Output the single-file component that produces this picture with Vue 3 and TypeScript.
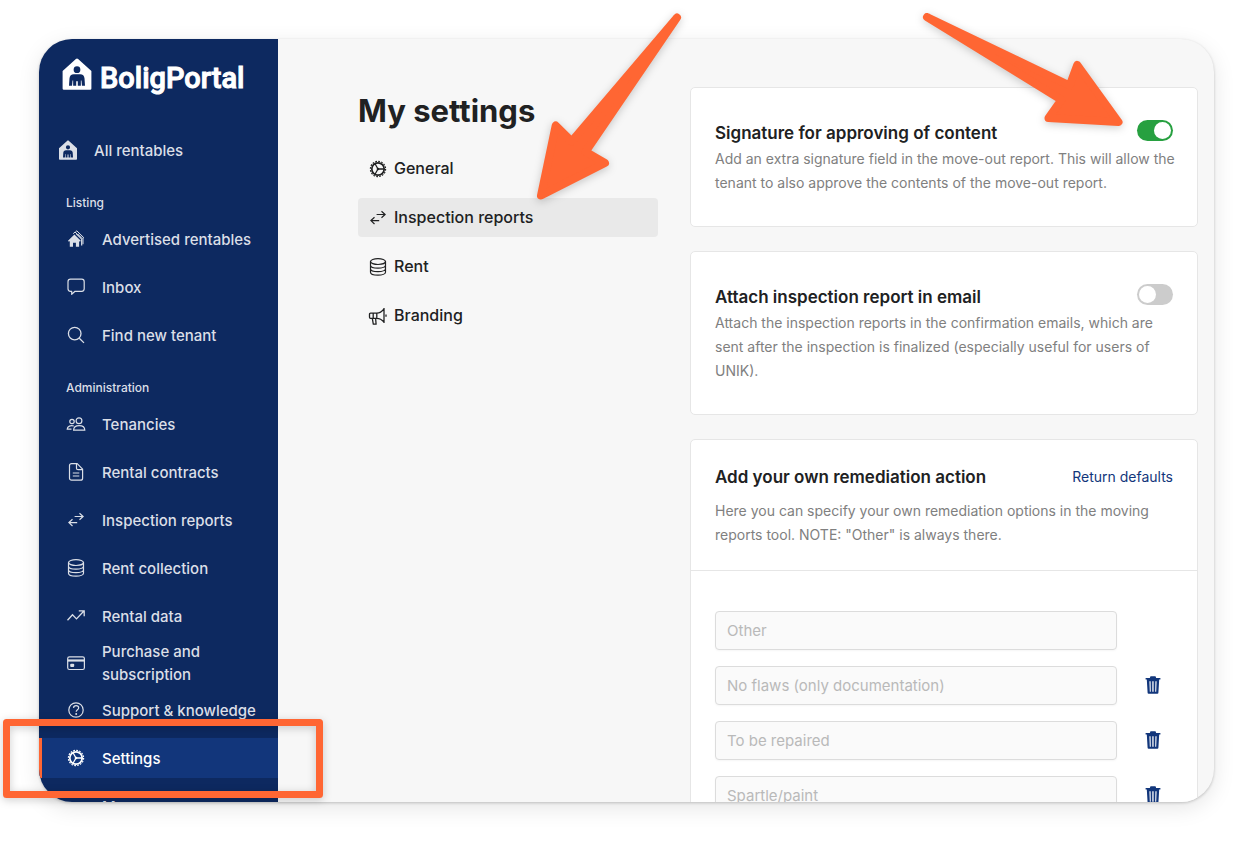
<script setup lang="ts">
import { ref } from 'vue'

interface NavItem {
  label: string
  icon: string
  active?: boolean
  tall?: boolean
}

interface Action {
  id: string
  label: string
  removable: boolean
}

const icons: Record<string, string> = {
  person:
    '<path fill="currentColor" fill-rule="evenodd" d="M9.300.7a1 1 0 0 1 1.400 0L19 8.200V19a.8.8 0 0 1-.8.8H1.800a.8.8 0 0 1-.8-.8V8.200ZM10 5.200a2.100 2.100 0 1 0 0 4.200 2.100 2.100 0 0 0 0-4.200ZM8 10.200c-1.600 0-2.600 1-2.700 2.600L5 17.400h1.900l.3-3.400h.4v3.400h1.900v-2.900h1v2.900h1.900V14h.4l.3 3.400H15l-.3-4.600c-.1-1.600-1.100-2.600-2.700-2.600Z"/>',
  houses:
    '<path fill="currentColor" d="M2 11.800 8.400 5.600l6.400 6.200-.9 1-.8-.7v5.600h-3.200v-4H7v4H3.800v-5.600l-.9.700Z"/><path d="M7.200 4.700 9 3l6.800 6.600v6.900M9.200 3.300l1.600-1.500 7 6.900-.8.700v5.800" fill="none" stroke="currentColor" stroke-width="1"/><path d="m10 4.900 5.500 5.400v6M12 4.900l4.900 4.800" fill="none" stroke="currentColor" stroke-width=".8"/>',
  chat:
    '<path d="M4.500 2.200h11.200a2.500 2.500 0 0 1 2.500 2.500v7.100a2.500 2.500 0 0 1-2.500 2.500H9l-3.300 3v-3H4.500a2.500 2.500 0 0 1-2.500-2.500V4.700a2.500 2.500 0 0 1 2.500-2.500Z" fill="none" stroke="currentColor" stroke-width="1.200" stroke-linejoin="round"/>',
  search:
    '<circle cx="8.700" cy="8.600" r="6.300" fill="none" stroke="currentColor" stroke-width="1.300"/><path d="m13.300 13.200 4.700 4.700" stroke="currentColor" stroke-width="1.300"/>',
  people:
    '<g fill="none" stroke="currentColor" stroke-width="1.200"><circle cx="13" cy="6.700" r="2.900"/><circle cx="6" cy="7.500" r="2.200"/><path d="M7.600 16.200c0-3 2.500-4.600 5.600-4.600s5.600 1.600 5.600 4.600ZM7.800 12c-3-.8-6.500.2-6.600 3.200h4.300"/></g>',
  doc:
    '<g fill="none" stroke="currentColor" stroke-width="1.200" stroke-linejoin="round"><path d="M5.500 1.600h5.700l5.400 5.600v9a2 2 0 0 1-2 2H5.500a2 2 0 0 1-2-2V3.600a2 2 0 0 1 2-2Z"/><path d="M10.500 1.600v4.600a1.500 1.500 0 0 0 1.500 1.500h4.500M6.800 11h6.500M6.800 14h6.500"/></g>',
  swap:
    '<path d="M8.600 6.500h8.300M13.500 3.300l3.600 3.200-3.600 3.200M11.200 12.600H3M6.500 9.200l-3.600 3.400 3.600 3.400" fill="none" stroke="currentColor" stroke-width="1.200"/>',
  coins:
    '<g fill="none" stroke="currentColor" stroke-width="1.200"><ellipse cx="10" cy="4.600" rx="7.500" ry="2.900"/><path d="M2.500 4.600v10.600c0 1.600 3.300 2.900 7.500 2.900s7.500-1.300 7.500-2.900V4.600M2.500 8.200c0 1.600 3.300 2.900 7.500 2.900s7.500-1.300 7.500-2.900M2.500 11.700c0 1.600 3.300 2.900 7.500 2.900s7.500-1.300 7.500-2.900"/></g>',
  trend:
    '<path d="m1.500 14.200 5-5.400 4 4.100 7.400-7.900M12.800 4.800h5.400v5.400" fill="none" stroke="currentColor" stroke-width="1.300"/>',
  card:
    '<rect x="1.700" y="3.800" width="16.700" height="12.700" rx="1.800" fill="none" stroke="currentColor" stroke-width="1.200"/><path d="M1.700 7.500h16.700" stroke="currentColor" stroke-width="2.200"/><rect x="4.200" y="10.700" width="4" height="3.300" rx="1" fill="currentColor"/>',
  help:
    '<g fill="none" stroke="currentColor" stroke-width="1.200"><circle cx="10" cy="10" r="7.200"/><path d="M7.500 7.900c.1-1.600 1.200-2.300 2.600-2.300 1.500 0 2.600.9 2.600 2.200 0 2-2.500 1.900-2.500 4"/></g><circle cx="10.200" cy="14" r="1" fill="currentColor"/>',
  gear:
    '<g fill="none" stroke="currentColor"><circle cx="10" cy="10" r="6.200" stroke-width="1.700"/><circle cx="10" cy="10" r="7.600" stroke-width="1.200" stroke-dasharray="1.700 1.284"/><circle cx="10" cy="10" r="1.300" fill="currentColor" stroke="none"/><path stroke-width="1.300" d="M10 10h6M10 10 7 4.800M10 10l-3 5.200"/></g>',
  horn:
    '<g fill="none" stroke="currentColor" stroke-width="1.300" stroke-linejoin="round"><path d="M2.500 7.200h6.300c3 0 5-1.400 7.200-4.400V16c-2.200-2.500-4.200-3.700-7.200-3.700H2.500a1 1 0 0 1-1-1V8.200a1 1 0 0 1 1-1ZM5.200 7.200v5.100M8.800 7.200v5.100M4.300 12.300l1 5.900h2.800l-.5-5.900M16 2v15M18 8.500v2.200"/></g>',
  trash:
    '<path fill="currentColor" fill-rule="evenodd" d="M7.500 1.200h5l.7 1.700h4.200v1.700h-1.200l-.8 13.200a1 1 0 0 1-1 1H5.600a1 1 0 0 1-1-1L3.800 4.600H2.600V2.900h4.200ZM6.400 6.200l.4 10.600h1L7.600 6.200Zm2.900 0v10.600h1.300V6.200Zm3.100 0-.2 10.600h1l.4-10.600Z"/>',
}

const listing: NavItem[] = [
  { label: 'Advertised rentables', icon: 'houses' },
  { label: 'Inbox', icon: 'chat' },
  { label: 'Find new tenant', icon: 'search' },
]

const administration: NavItem[] = [
  { label: 'Tenancies', icon: 'people' },
  { label: 'Rental contracts', icon: 'doc' },
  { label: 'Inspection reports', icon: 'swap' },
  { label: 'Rent collection', icon: 'coins' },
  { label: 'Rental data', icon: 'trend' },
  { label: 'Purchase and subscription', icon: 'card', tall: true },
  { label: 'Support & knowledge', icon: 'help' },
  { label: 'Settings', icon: 'gear', active: true },
  { label: 'More', icon: '' },
]

const tabs: NavItem[] = [
  { label: 'General', icon: 'gear' },
  { label: 'Inspection reports', icon: 'swap', active: true },
  { label: 'Rent', icon: 'coins' },
  { label: 'Branding', icon: 'horn' },
]

const actions: Action[] = [
  { id: 'other', label: 'Other', removable: false },
  { id: 'none', label: 'No flaws (only documentation)', removable: true },
  { id: 'repair', label: 'To be repaired', removable: true },
  { id: 'paint', label: 'Spartle/paint', removable: true },
]

const signature = ref(true)
const attach = ref(false)
</script>

<template>
  <div class="page">
    <div class="window">
      <aside class="sidebar">
        <a class="logo" href="#">
          <svg class="logo-mark" viewBox="0 0 20 20" aria-hidden="true" v-html="icons.person"></svg>
          <span>BoligPortal</span>
        </a>
        <nav aria-label="Main">
          <a class="nav-link all" href="#">
            <svg class="icon" viewBox="0 0 20 20" aria-hidden="true" v-html="icons.person"></svg>
            <span>All rentables</span>
          </a>
          <h2 class="group">Listing</h2>
          <ul>
            <li v-for="item in listing" :key="item.label">
              <a class="nav-link" href="#">
                <svg class="icon" viewBox="0 0 20 20" aria-hidden="true" v-html="icons[item.icon]"></svg>
                <span>{{ item.label }}</span>
              </a>
            </li>
          </ul>
          <h2 class="group">Administration</h2>
          <ul>
            <li v-for="item in administration" :key="item.label" :class="{ tall: item.tall }">
              <a class="nav-link" :class="{ active: item.active }" href="#">
                <svg class="icon" viewBox="0 0 20 20" aria-hidden="true" v-html="icons[item.icon]"></svg>
                <span>{{ item.label }}</span>
              </a>
            </li>
          </ul>
        </nav>
      </aside>

      <main class="main">
        <section class="menu">
          <h1>My settings</h1>
          <nav class="tabs" aria-label="Settings">
            <a v-for="tab in tabs" :key="tab.label" class="tab" :class="{ active: tab.active }" href="#">
              <svg class="icon" viewBox="0 0 20 20" aria-hidden="true" v-html="icons[tab.icon]"></svg>
              <span>{{ tab.label }}</span>
            </a>
          </nav>
        </section>

        <div class="cards">
          <section class="card option">
            <div class="row">
              <h3><label for="signature">Signature for approving of content</label></h3>
              <input id="signature" v-model="signature" class="switch" type="checkbox" role="switch" />
            </div>
            <p>Add an extra signature field in the move-out report. This will allow the tenant to also approve the contents of the move-out report.</p>
          </section>

          <section class="card option">
            <div class="row">
              <h3><label for="attach">Attach inspection report in email</label></h3>
              <input id="attach" v-model="attach" class="switch" type="checkbox" role="switch" />
            </div>
            <p>Attach the inspection reports in the confirmation emails, which are sent after the inspection is finalized (especially useful for users of UNIK).</p>
          </section>

          <section class="card">
            <header class="card-head">
              <div class="row">
                <h3>Add your own remediation action</h3>
                <button class="defaults" type="button">Return defaults</button>
              </div>
              <p>Here you can specify your own remediation options in the moving reports tool. NOTE: "Other" is always there.</p>
            </header>
            <div class="actions">
              <div v-for="action in actions" :key="action.id" class="action">
                <input :id="action.id" class="field" type="text" :placeholder="action.label" :aria-label="action.label" disabled />
                <button v-if="action.removable" class="remove" type="button" :aria-label="'Remove ' + action.label">
                  <svg class="icon" viewBox="0 0 20 20" aria-hidden="true" v-html="icons.trash"></svg>
                </button>
                <span v-else class="remove"></span>
              </div>
            </div>
          </section>
        </div>
      </main>
    </div>

    <svg class="marks" width="1253" height="841" viewBox="0 0 1253 841" aria-hidden="true">
      <rect x="6.500" y="722.500" width="313" height="72" fill="none" stroke="#ff6633" stroke-width="7" stroke-linejoin="round" />
      <g fill="#ff6633" stroke="#ff6633" stroke-width="8" stroke-linejoin="round">
        <path d="M677 17.500 571.700 141.400 555.700 125.500 541 195.500 605 163 585.600 151.800Z" />
        <path d="M927 17 1069.700 85.500 1077.300 65 1118.500 122 1048.500 118 1061.400 99.800Z" />
      </g>
    </svg>
  </div>
</template>

<style>
body {
  margin: 0;
  background: #ffffff;
}
</style>

<style scoped>
* {
  box-sizing: border-box;
}
.page {
  position: relative;
  height: 100vh;
  padding: 39px;
  overflow: hidden;
  font-family: Inter, "Liberation Sans", sans-serif;
  color: #202122;
}
.window {
  display: flex;
  height: 100%;
  overflow: hidden;
  border-radius: 33px;
  background: #f7f7f7;
  box-shadow: 0 1px 3px rgba(0, 0, 0, 0.2), 0 6px 22px rgba(0, 0, 0, 0.1);
}
h1,
h2,
h3,
p,
ul {
  margin: 0;
  padding: 0;
}
ul {
  list-style: none;
}
a {
  color: inherit;
  text-decoration: none;
}
button {
  border: 0;
  padding: 0;
  background: none;
  font: inherit;
  cursor: pointer;
}
.icon {
  flex: none;
  width: 20px;
  height: 20px;
}
.sidebar {
  flex: none;
  width: 239px;
  padding-top: 19px;
  background: #0d2960;
  color: #dbdfe7;
}
.logo {
  display: flex;
  align-items: center;
  gap: 7px;
  height: 40px;
  margin-bottom: 28px;
  padding-left: 22px;
  color: #ffffff;
  font-family: Roboto, sans-serif;
  font-size: 29px;
  font-weight: 500;
  -webkit-text-stroke: 1px #ffffff;
}
.logo-mark {
  width: 32px;
  height: 32px;
  margin-bottom: 8px;
}
.nav-link {
  display: flex;
  align-items: center;
  gap: 16px;
  min-height: 40px;
  padding-left: 24px;
  border-left: 3px solid transparent;
  font-size: 15px;
  font-weight: 500;
  line-height: 23px;
}
.nav-link.all {
  min-height: 48px;
  padding-left: 16px;
}
.nav-link.active {
  border-left-color: #ff6633;
  background: #12367b;
  color: #ffffff;
}
.group {
  margin: 19px 0 2px;
  padding-left: 27px;
  font-size: 12px;
  font-weight: 500;
  line-height: 20px;
}
.sidebar li {
  display: grid;
  align-items: center;
  min-height: 48px;
}
.sidebar li.tall {
  min-height: 46px;
}
.main {
  display: flex;
  flex: 1;
  align-items: flex-start;
  gap: 32px;
  min-width: 0;
  padding: 48px 16px 0 80px;
}
.menu {
  flex: none;
  width: 300px;
}
h1 {
  margin-bottom: 14px;
  font-size: 31px;
  font-weight: 700;
  line-height: 48px;
}
.tabs {
  display: grid;
  gap: 10px;
}
.tab {
  display: flex;
  align-items: center;
  gap: 6px;
  height: 39px;
  padding: 0 10px;
  border-radius: 4px;
  font-size: 16px;
  font-weight: 500;
}
.tab span {
  padding-bottom: 2px;
}
.tab.active {
  background: #e9e9e9;
}
.cards {
  display: grid;
  flex: 1;
  gap: 24px;
  min-width: 0;
}
.card {
  border: 1px solid #e6e6e6;
  border-radius: 5px;
  background: #ffffff;
}
.option {
  padding: 32px 24px 31px;
}
.row {
  display: flex;
  align-items: center;
  justify-content: space-between;
  gap: 16px;
  margin-bottom: 1px;
}
h3 {
  font-size: 17px;
  font-weight: 600;
  line-height: 26px;
}
p {
  margin-right: -6px;
  color: #808080;
  font-size: 14px;
  line-height: 24px;
}
.switch {
  display: flex;
  align-items: center;
  width: 36px;
  height: 21px;
  margin: 0 0 5px;
  padding: 0 2px;
  border-radius: 11px;
  background: #cccccc;
  appearance: none;
  cursor: pointer;
}
.switch::before {
  width: 17px;
  height: 17px;
  border-radius: 50%;
  background: #ffffff;
  content: "";
}
.switch:checked {
  justify-content: flex-end;
  background: #27a040;
}
.card-head {
  display: grid;
  gap: 8px;
  padding: 24px 24px 23px;
  border-bottom: 1px solid #e6e6e6;
}
.defaults {
  color: #12367b;
  font-size: 14px;
  line-height: 24px;
}
.actions {
  display: grid;
  gap: 16px;
  padding: 40px 24px;
}
.action {
  display: flex;
  align-items: center;
  gap: 16px;
}
.field {
  flex: 1;
  min-width: 0;
  height: 39px;
  padding: 0 11px;
  border: 1px solid #dcdcdc;
  border-radius: 4px;
  background: #fafafa;
  box-shadow: 0 1px 2px rgba(0, 0, 0, 0.04);
  font-family: inherit;
  font-size: 15px;
}
.field::placeholder {
  color: #b9b9b9;
  opacity: 1;
}
.remove {
  display: grid;
  flex: none;
  place-items: center;
  width: 40px;
  height: 39px;
  padding-bottom: 2px;
  color: #12367b;
}
.marks {
  position: absolute;
  top: 0;
  left: 0;
  filter: drop-shadow(0 2px 4px rgba(0, 0, 0, 0.2));
  pointer-events: none;
}
</style>
